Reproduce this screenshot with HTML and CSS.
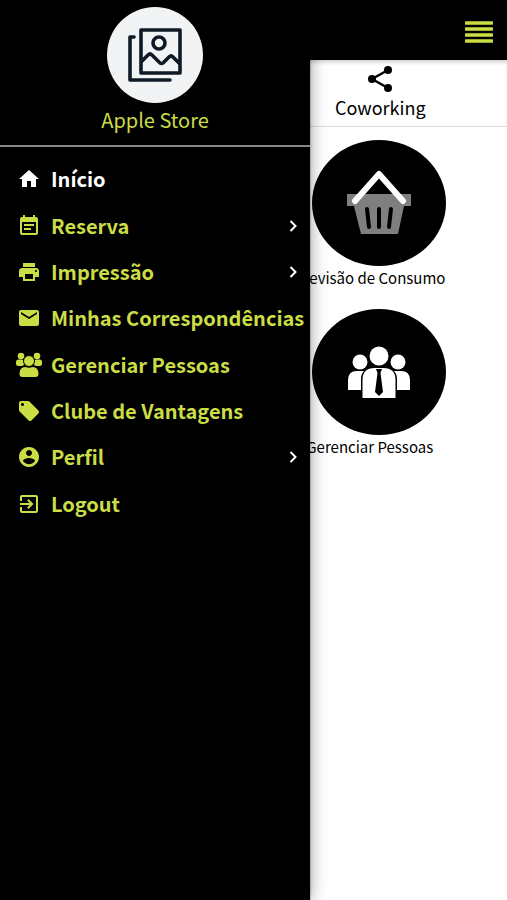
FILE: index.html
```html
<!DOCTYPE html>
<html lang="pt-BR">
<head>
    <meta charset="UTF-8">
    <meta name="viewport" content="width=device-width, initial-scale=1.0">
    <title>Apple Store</title>
    <link rel="stylesheet" href="styles.css">
</head>
<body>

    <header class="topbar">
        <button class="menu-btn" type="button" aria-label="Menu">
            <svg viewBox="0 0 28 22" width="28" height="22">
                <path d="M1 2h26M1 8h26M1 14h26M1 20h26" stroke="currentColor" stroke-width="3.4" stroke-linecap="round"/>
            </svg>
        </button>
    </header>

    <nav class="tabs">
        <a class="tab" href="#coworking">
            <svg viewBox="0 0 26 28" width="26" height="28">
                <path d="M21 5L5 14l16 9" fill="none" stroke="currentColor" stroke-width="2.4"/>
                <circle cx="21" cy="5" r="4"/>
                <circle cx="5" cy="14" r="4"/>
                <circle cx="21" cy="23" r="4"/>
            </svg>
            <span>Coworking</span>
        </a>
    </nav>

    <main class="cards">
        <a class="card" href="#consumo">
            <span class="card-icon">
                <svg viewBox="0 0 64 66" width="64" height="66">
                    <path d="M0 24h64v12h-7l-6 28H14L7 36H0z" fill="#7f7f7f"/>
                    <path d="M20 39l2 18M32 39v18M44 39l-2 18" stroke="#000" stroke-width="4" stroke-linecap="round"/>
                    <path d="M8 31L32 4l24 27" fill="none" stroke="#fff" stroke-width="6" stroke-linecap="round" stroke-linejoin="round"/>
                </svg>
            </span>
            <span class="card-label">Previsão de Consumo</span>
        </a>
        <a class="card" href="#pessoas">
            <span class="card-icon">
                <svg viewBox="0 0 64 54" width="64" height="54" fill="#fff">
                    <circle cx="13" cy="17" r="7.5"/>
                    <circle cx="51" cy="17" r="7.5"/>
                    <path d="M1 45V35q0-9 9-9h7q-3 3-3 8v11zM63 45V35q0-9-9-9h-7q3 3 3 8v11z"/>
                    <circle cx="32" cy="11" r="9.5"/>
                    <path d="M15.500 53V35q0-12 12-12h9q12 0 12 12v18z"/>
                    <path d="M29 24h6l-1.500 4 2.500 19-4 4-4-4 2.500-19z" fill="#000"/>
                </svg>
            </span>
            <span class="card-label">Gerenciar Pessoas</span>
        </a>
    </main>

    <aside class="drawer">
        <div class="drawer-header">
            <div class="avatar">
                <svg viewBox="0 0 54 54" width="54" height="54" fill="none" stroke="#101a26" stroke-width="3.600" stroke-linecap="round" stroke-linejoin="round">
                    <path d="M6 9H2v43h40"/>
                    <path d="M13 2h39v43H13z"/>
                    <circle cx="31" cy="15" r="6"/>
                    <path d="M14 33l6-6q2-2 4 0l8 8q1.500 1 3 0l6-6q2-2 4 0l6 6"/>
                </svg>
            </div>
            <div class="store-name">Apple Store</div>
        </div>

        <ul class="menu">
            <li>
                <a class="menu-item active" href="#inicio">
                    <svg class="icon" viewBox="0 0 24 24"><path d="M10 20v-6h4v6h5v-8h3L12 3 2 12h3v8z"/></svg>
                    <span>Início</span>
                </a>
            </li>
            <li>
                <a class="menu-item" href="#reserva">
                    <svg class="icon" viewBox="0 0 24 24"><path d="M17 10H7v2h10v-2zm2-7h-1V1h-2v2H8V1H6v2H5c-1.110 0-1.990.9-1.990 2L3 19c0 1.100.89 2 2 2h14c1.100 0 2-.9 2-2V5c0-1.100-.9-2-2-2zm0 16H5V8h14v11zm-5-5H7v2h7v-2z"/></svg>
                    <span>Reserva</span>
                    <svg class="arrow" viewBox="0 0 8 12"><path d="M1.500 1l5 5-5 5"/></svg>
                </a>
            </li>
            <li>
                <a class="menu-item" href="#impressao">
                    <svg class="icon" viewBox="0 0 24 24"><path d="M19 8H5c-1.660 0-3 1.340-3 3v6h4v4h12v-4h4v-6c0-1.660-1.340-3-3-3zm-3 11H8v-5h8v5zm3-7c-.55 0-1-.45-1-1s.45-1 1-1 1 .45 1 1-.45 1-1 1zm-1-9H6v4h12V3z"/></svg>
                    <span>Impressão</span>
                    <svg class="arrow" viewBox="0 0 8 12"><path d="M1.500 1l5 5-5 5"/></svg>
                </a>
            </li>
            <li>
                <a class="menu-item" href="#correspondencias">
                    <svg class="icon" viewBox="0 0 24 24"><path d="M20 4H4c-1.100 0-1.990.9-1.990 2L2 18c0 1.100.9 2 2 2h16c1.100 0 2-.9 2-2V6c0-1.100-.9-2-2-2zm0 4l-8 5-8-5V6l8 5 8-5v2z"/></svg>
                    <span>Minhas Correspondências</span>
                </a>
            </li>
            <li>
                <a class="menu-item" href="#gerenciar">
                    <svg class="icon icon-people" viewBox="0 0 26 26">
                        <circle cx="5" cy="4" r="3.300"/>
                        <circle cx="21" cy="4" r="3.300"/>
                        <rect x="0" y="7.500" width="8" height="6.500" rx="2.500"/>
                        <rect x="18" y="7.500" width="8" height="6.500" rx="2.500"/>
                        <circle cx="13" cy="9" r="5.500" stroke="#000"/>
                        <path d="M3.500 22q0-7 6-7q3.500 1.500 7 0q6 0 6 7q0 3-3 3h-13q-3 0-3-3z"/>
                    </svg>
                    <span>Gerenciar Pessoas</span>
                </a>
            </li>
            <li>
                <a class="menu-item" href="#clube">
                    <svg class="icon" viewBox="0 0 24 24"><path d="M21.410 11.580l-9-9C12.050 2.220 11.550 2 11 2H4c-1.100 0-2 .9-2 2v7c0 .55.22 1.050.59 1.420l9 9c.36.36.86.58 1.410.58s1.050-.22 1.410-.59l7-7c.37-.36.59-.86.59-1.410s-.23-1.060-.59-1.420zM5.500 7C4.670 7 4 6.330 4 5.500S4.670 4 5.500 4 7 4.670 7 5.500 6.330 7 5.500 7z"/></svg>
                    <span>Clube de Vantagens</span>
                </a>
            </li>
            <li>
                <a class="menu-item" href="#perfil">
                    <svg class="icon" viewBox="0 0 24 24"><path d="M12 2C6.480 2 2 6.480 2 12s4.480 10 10 10 10-4.480 10-10S17.520 2 12 2zm0 3c1.660 0 3 1.340 3 3s-1.340 3-3 3-3-1.340-3-3 1.340-3 3-3zm0 14.200c-2.500 0-4.710-1.280-6-3.220.03-1.990 4-3.080 6-3.080 1.990 0 5.970 1.090 6 3.080-1.290 1.940-3.500 3.220-6 3.220z"/></svg>
                    <span>Perfil</span>
                    <svg class="arrow" viewBox="0 0 8 12"><path d="M1.500 1l5 5-5 5"/></svg>
                </a>
            </li>
            <li>
                <a class="menu-item" href="#logout">
                    <svg class="icon" viewBox="0 0 24 24"><path d="M10.090 15.590L11.500 17l5-5-5-5-1.410 1.410L12.670 11H3v2h9.670l-2.580 2.590zM19 3H5c-1.110 0-2 .9-2 2v4h2V5h14v14H5v-4H3v4c0 1.100.89 2 2 2h14c1.100 0 2-.9 2-2V5c0-1.100-.9-2-2-2z"/></svg>
                    <span>Logout</span>
                </a>
            </li>
        </ul>
    </aside>

</body>
</html>
```

FILE: styles.css
```css
* {
    box-sizing: border-box;
}

body {
    font-family: "Noto Sans CJK JP", "Noto Sans CJK SC", sans-serif;
    margin: 0;
    min-height: 100vh;
    background-color: #fff;
    color: #000;
    position: relative;
    overflow-x: hidden;
}

a {
    color: inherit;
    text-decoration: none;
}

svg {
    display: block;
    flex-shrink: 0;
}

.topbar {
    display: flex;
    align-items: center;
    justify-content: flex-end;
    height: 60px;
    padding: 4px 14px 0;
    background-color: #000;
}

.menu-btn {
    padding: 0;
    border: none;
    background: none;
    color: #cbdd45;
    cursor: pointer;
}

.tabs {
    display: grid;
    grid-template-columns: 1fr 1fr;
    border-bottom: 1px solid #ddd;
    box-shadow: inset 0 4px 4px -2px rgba(0, 0, 0, 0.2);
}

.tab {
    grid-column: 2;
    display: flex;
    flex-direction: column;
    align-items: center;
    padding: 5px 0;
    font-size: 18px;
    line-height: 28px;
}

.cards {
    display: grid;
    grid-template-columns: 1fr 1fr;
    row-gap: 19px;
    padding: 13px 2px 0 0;
}

.card {
    grid-column: 2;
    display: flex;
    flex-direction: column;
    align-items: center;
}

.card-icon {
    display: flex;
    align-items: center;
    justify-content: center;
    width: 134px;
    height: 126px;
    border-radius: 50%;
    background-color: #000;
}

.card-label {
    padding-right: 18px;
    font-size: 15px;
    line-height: 24px;
    white-space: nowrap;
}

.drawer {
    position: absolute;
    top: 0;
    bottom: 0;
    left: 0;
    width: 310px;
    background-color: #000;
    box-shadow: 0 0 2px rgba(0, 0, 0, 0.5), 0 0 16px rgba(0, 0, 0, 0.4);
    color: #cbdd45;
}

.drawer-header {
    display: flex;
    flex-direction: column;
    align-items: center;
    padding: 7px 0 8px;
    border-bottom: 2px solid #888;
}

.avatar {
    display: flex;
    align-items: center;
    justify-content: center;
    width: 96px;
    height: 96px;
    border-radius: 50%;
    background-color: #f2f3f4;
}

.store-name {
    font-size: 20px;
    line-height: 34px;
}

.menu {
    display: grid;
    grid-template-columns: minmax(0, 1fr);
    grid-auto-rows: 1fr;
    height: 380px;
    margin: 0;
    padding: 9px 0 0;
    list-style: none;
}

.menu-item {
    display: flex;
    align-items: center;
    height: 100%;
    padding: 0 13px 0 17px;
    font-size: 20px;
    font-weight: bold;
    line-height: 30px;
    white-space: nowrap;
}

.menu-item.active {
    color: #fff;
}

.icon {
    width: 24px;
    height: 24px;
    margin-right: 10px;
    fill: currentColor;
}

.icon-people {
    width: 26px;
    height: 26px;
    margin: 0 9px 0 -1px;
}

.arrow {
    width: 8px;
    height: 12px;
    margin-left: auto;
    fill: none;
    stroke: #fff;
    stroke-width: 2;
}
```
